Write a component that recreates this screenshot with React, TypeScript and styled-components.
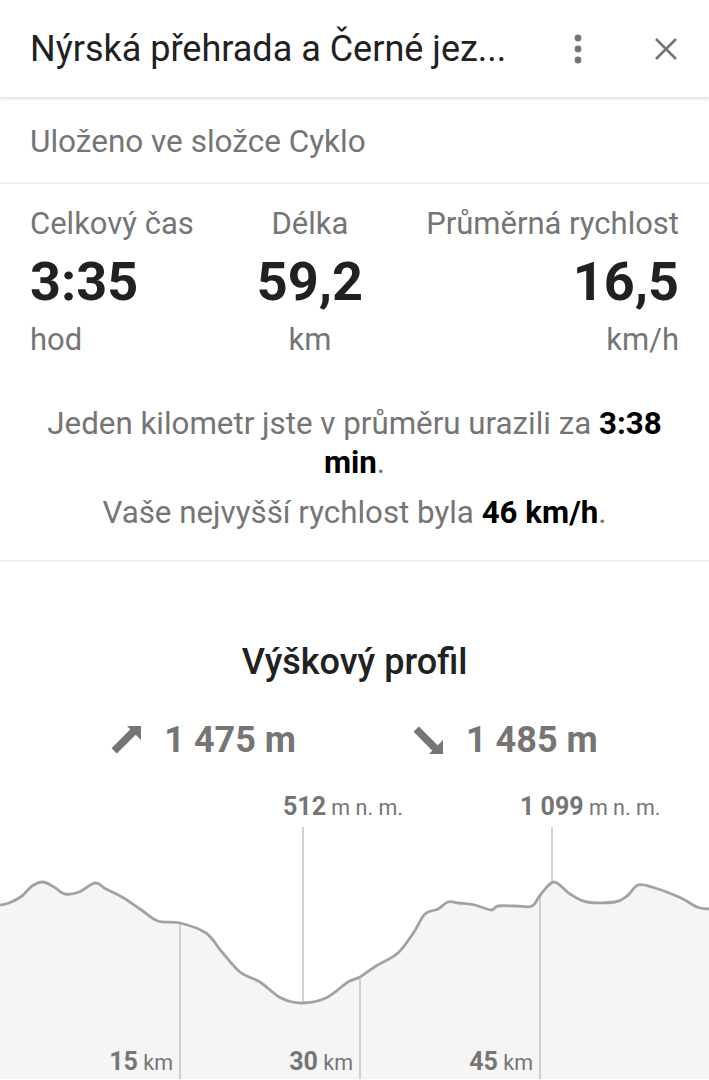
import React from "react";
import styled, { createGlobalStyle } from "styled-components";

const GlobalStyle = createGlobalStyle`
  html, body {
    margin: 0;
    padding: 0;
    background: #ffffff;
    font-family: Roboto, "Noto Sans", sans-serif;
  }
`;

type Stat = { label: string; value: string; unit: string; align: "left" | "center" | "right" };

const stats: Stat[] = [
  { label: "Celkový čas", value: "3:35", unit: "hod", align: "left" },
  { label: "Délka", value: "59,2", unit: "km", align: "center" },
  { label: "Průměrná rychlost", value: "16,5", unit: "km/h", align: "right" },
];

// elevation profile, chart coordinates (709 x 300)
const profile: [number, number][] = [
  [0, 126], [9, 124], [22, 117], [32, 107], [43, 103], [54, 108], [65, 115], [79, 113],
  [95, 104], [106, 110], [122, 118], [140, 130], [158, 142], [180, 144], [206, 154],
  [222, 173], [240, 193], [260, 203], [281, 219], [302, 224], [326, 219], [348, 203],
  [360, 198], [376, 187], [398, 174], [414, 153], [425, 135], [438, 130], [448, 123],
  [459, 124], [475, 126], [491, 131], [498, 127], [516, 127], [532, 127], [541, 115],
  [554, 103], [570, 115], [587, 123], [615, 123], [627, 117], [638, 106], [652, 108],
  [679, 118], [697, 128], [709, 130],
];

function smooth(pts: [number, number][]) {
  let d = `M${pts[0][0]} ${pts[0][1]}`;
  for (let i = 0; i < pts.length - 1; i++) {
    const p0 = pts[i - 1] || pts[i];
    const p1 = pts[i];
    const p2 = pts[i + 1];
    const p3 = pts[i + 2] || p2;
    const c1x = p1[0] + (p2[0] - p0[0]) / 6;
    const c1y = p1[1] + (p2[1] - p0[1]) / 6;
    const c2x = p2[0] - (p3[0] - p1[0]) / 6;
    const c2y = p2[1] - (p3[1] - p1[1]) / 6;
    d += ` C${c1x.toFixed(1)} ${c1y.toFixed(1)} ${c2x.toFixed(1)} ${c2y.toFixed(1)} ${p2[0]} ${p2[1]}`;
  }
  return d;
}

const linePath = smooth(profile);
const areaPath = `${linePath} L709 300 L0 300 Z`;

function ArrowIcon({ down }: { down?: boolean }) {
  return (
    <svg width="30" height="28" viewBox="0 0 30 28" aria-hidden>
      <g transform={down ? "translate(0 28) scale(1 -1)" : undefined}>
        <polygon points="16,0 30,0 30,14" fill="#757575" />
        <line x1="3.2" y1="24.8" x2="23" y2="5" stroke="#757575" strokeWidth="7.5" />
      </g>
    </svg>
  );
}

export default function App() {
  return (
    <Page>
      <GlobalStyle />
      <Header>
        <Title>Nýrská přehrada a Černé jez...</Title>
        <IconBtn aria-label="Více">
          <svg width="12" height="30" viewBox="0 0 12 30">
            <circle cx="6" cy="4" r="3.4" fill="#757575" />
            <circle cx="6" cy="15" r="3.4" fill="#757575" />
            <circle cx="6" cy="26" r="3.4" fill="#757575" />
          </svg>
        </IconBtn>
        <IconBtn aria-label="Zavřít">
          <svg width="24" height="24" viewBox="0 0 24 24">
            <path d="M2 2 L22 22 M22 2 L2 22" stroke="#757575" strokeWidth="2.6" fill="none" />
          </svg>
        </IconBtn>
      </Header>

      <Folder>Uloženo ve složce Cyklo</Folder>

      <Stats>
        <StatRow>
          {stats.map((s) => (
            <StatCol key={s.label} $align={s.align}>
              <StatLabel>{s.label}</StatLabel>
              <StatValue>{s.value}</StatValue>
              <StatUnit>{s.unit}</StatUnit>
            </StatCol>
          ))}
        </StatRow>
        <Summary>
          <SummaryLine>
            Jeden kilometr jste v průměru urazili za <b>3:38</b> <b>min</b>.
          </SummaryLine>
          <SummaryLine>
            Vaše nejvyšší rychlost byla <b>46 km/h</b>.
          </SummaryLine>
        </Summary>
      </Stats>

      <Elevation>
        <ElevationTitle>Výškový profil</ElevationTitle>
        <ClimbRow>
          <Climb>
            <ArrowIcon />
            <span>1 475 m</span>
          </Climb>
          <Climb>
            <ArrowIcon down />
            <span>1 485 m</span>
          </Climb>
        </ClimbRow>
        <Chart viewBox="0 0 709 300" width="709" height="300">
          <path d={areaPath} fill="#f5f5f5" />
          <g stroke="#c2c2c2" strokeWidth="1.5">
            <line x1="180" y1="144" x2="180" y2="300" />
            <line x1="303" y1="48" x2="303" y2="224" />
            <line x1="360" y1="198" x2="360" y2="300" />
            <line x1="540" y1="116" x2="540" y2="300" />
            <line x1="552" y1="48" x2="552" y2="103" />
          </g>
          <path d={linePath} fill="none" stroke="#a2a2a2" strokeWidth="2.8" strokeLinejoin="round" />
          <ChartText x="283" y="36">
            <tspan className="num">512</tspan>
            <tspan className="unit"> m n. m.</tspan>
          </ChartText>
          <ChartText x="520" y="36">
            <tspan className="num">1 099</tspan>
            <tspan className="unit"> m n. m.</tspan>
          </ChartText>
          <ChartText x="173" y="291" textAnchor="end">
            <tspan className="num">15</tspan>
            <tspan className="unit"> km</tspan>
          </ChartText>
          <ChartText x="353" y="291" textAnchor="end">
            <tspan className="num">30</tspan>
            <tspan className="unit"> km</tspan>
          </ChartText>
          <ChartText x="533" y="291" textAnchor="end">
            <tspan className="num">45</tspan>
            <tspan className="unit"> km</tspan>
          </ChartText>
        </Chart>
      </Elevation>
    </Page>
  );
}

const Page = styled.div`
  width: 709px;
  height: 1080px;
  overflow: hidden;
  background: #fff;
  color: #212121;
`;

const Header = styled.header`
  height: 98px;
  display: flex;
  align-items: center;
  padding: 0 19px 0 30px;
  box-shadow: 0 1px 3px rgba(0, 0, 0, 0.14);
  border-bottom: 1px solid #e6e6e6;
  box-sizing: border-box;
  gap: 40px;
`;

const Title = styled.h1`
  flex: 1;
  margin: 0;
  font-size: 36px;
  font-weight: 400;
  line-height: 44px;
  color: #212121;
  white-space: nowrap;
`;

const IconBtn = styled.button`
  width: 48px;
  height: 60px;
  display: flex;
  align-items: center;
  justify-content: center;
  background: none;
  border: none;
  padding: 0;
`;

const Folder = styled.div`
  height: 86px;
  display: flex;
  align-items: center;
  padding: 3px 30px 0;
  font-size: 31.5px;
  color: #757575;
  border-bottom: 2px solid #eeeeee;
  box-sizing: border-box;
`;

const Stats = styled.section`
  padding: 20px 30px 28px;
  border-bottom: 2px solid #eeeeee;
`;

const StatRow = styled.div`
  display: flex;
  justify-content: space-between;
`;

const StatCol = styled.div<{ $align: "left" | "center" | "right" }>`
  display: flex;
  flex-direction: column;
  text-align: ${(p) => p.$align};
`;

const StatLabel = styled.div`
  font-size: 31px;
  line-height: 40px;
  color: #757575;
`;

const StatValue = styled.div`
  font-size: 54px;
  font-weight: 700;
  line-height: 76px;
  color: #212121;
`;

const StatUnit = styled.div`
  font-size: 31px;
  line-height: 40px;
  color: #757575;
`;

const Summary = styled.div`
  margin-top: 44px;
  text-align: center;
`;

const SummaryLine = styled.p`
  margin: 0 0 11px;
  font-size: 31.3px;
  line-height: 39px;
  color: #757575;

  &:last-child {
    margin-bottom: 0;
  }

  b {
    color: #000;
    font-weight: 700;
  }
`;

const Elevation = styled.section`
  padding-top: 78px;
  display: flex;
  flex-direction: column;
  align-items: center;
`;

const ElevationTitle = styled.h2`
  margin: 0;
  font-size: 36px;
  font-weight: 500;
  line-height: 44px;
  color: #212121;
`;

const ClimbRow = styled.div`
  margin-top: 34px;
  display: flex;
  justify-content: center;
  gap: 117px;
`;

const Climb = styled.div`
  display: flex;
  align-items: center;
  gap: 23px;
  font-size: 36px;
  font-weight: 700;
  line-height: 44px;
  color: #757575;
`;

const Chart = styled.svg`
  display: block;
  margin-top: 17px;
  flex-shrink: 0;
`;

const ChartText = styled.text`
  font-family: Roboto, "Noto Sans", sans-serif;
  fill: #757575;

  .num {
    font-size: 25px;
    font-weight: 700;
  }
  .unit {
    font-size: 21.5px;
    font-weight: 400;
  }
`;
